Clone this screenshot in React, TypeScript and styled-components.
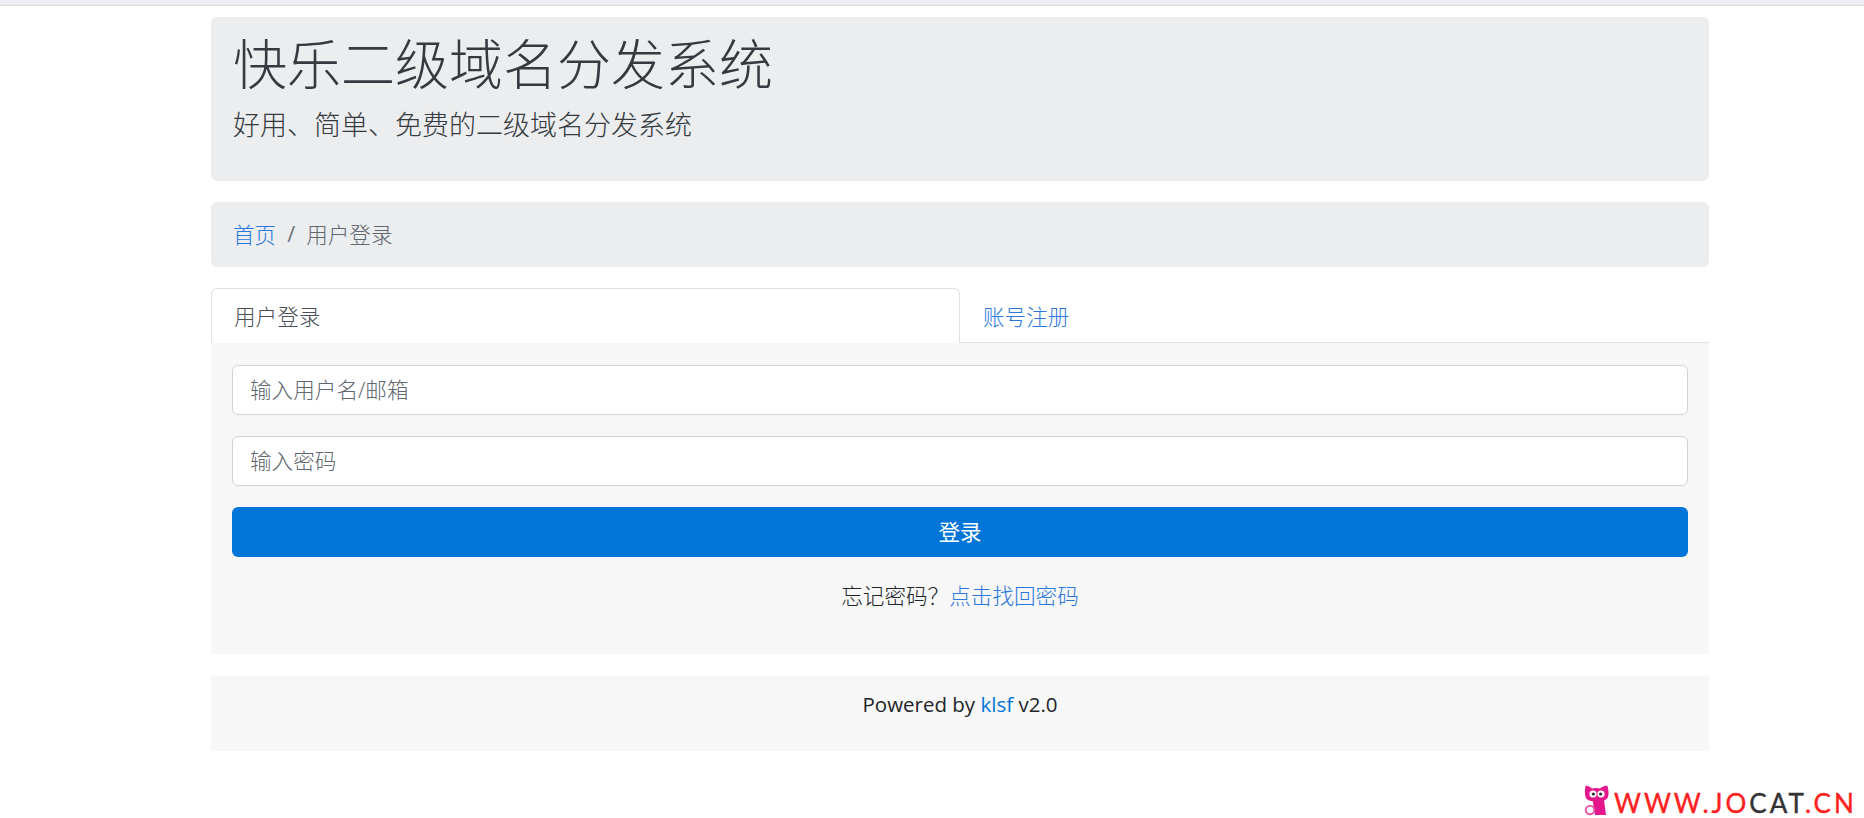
import React from "react";
import styled, { createGlobalStyle } from "styled-components";

const Global = createGlobalStyle`
  html, body { margin: 0; padding: 0; background: #fff; }
  body { font-family: "Open Sans", "Noto Sans CJK SC", sans-serif; font-size: 21.6px; font-weight: 300; color: #212529; overflow: hidden; }
  * { box-sizing: border-box; }
`;
const Page = styled.div`position: relative; width: 1864px; height: 818px; overflow: hidden;`;
const TopBar = styled.div`height: 6px; background: #efeef4; border-bottom: 1px solid #dcdce0;`;
const Container = styled.main`
  width: 1498px; margin-left: 211px; padding-top: 11px;
  display: flex; flex-direction: column;
`;
const Jumbotron = styled.header`
  height: 164px; background: #ecedef; border-radius: 6px; padding: 12px 22px 0; margin-bottom: 21px;
`;
const Title = styled.h1`
  margin: 0; font-size: 54px; font-weight: 300; line-height: 66px; color: #343a40;
  font-family: "Noto Sans CJK SC", sans-serif;
`;
const Lead = styled.p`
  margin: 11px 0 0; font-size: 27px; line-height: 36px; font-weight: 300; color: #343a40;
  font-family: "Noto Sans CJK SC", sans-serif;
`;
const Crumbs = styled.nav`
  height: 65px; background: #ecedef; border-radius: 6px; padding: 0 22px 3px; margin-bottom: 21px;
  display: flex; align-items: center; color: #5f676f;
`;
const Link = styled.a`color: #2a78dc; text-decoration: none;`;
const Sep = styled.span`padding: 0 11px; color: #6c757d; font-weight: 400;`;
const Tabs = styled.div`display: flex; height: 55px; border-bottom: 1px solid #dee2e6;`;
const Tab = styled.div<{ $active?: boolean }>`
  flex: 1; height: ${p => (p.$active ? "55px" : "54px")}; padding: 0 22px 1px; display: flex; align-items: center;
  color: ${p => (p.$active ? "#495057" : "#2a78dc")};
  background: #fff;
  border: 1px solid ${p => (p.$active ? "#dee2e6" : "transparent")};
  border-bottom: none; border-radius: 6px 6px 0 0;
`;
const Panel = styled.section`
  height: 311px; background: #f7f7f7; padding: 22px 21px 0; display: flex; flex-direction: column; gap: 21px;
`;
const Input = styled.input`
  display: block; width: 100%; height: 50px; border: 1px solid #ced4da; border-radius: 6px; background: #fff;
  padding: 0 17px 2px; font: inherit; outline: none;
  &::placeholder { color: #5f676f; opacity: 1; }
`;
const Button = styled.button`
  display: block; width: 100%; height: 50px; border: none; border-radius: 6px; background: #0275d8; color: #fff;
  font: inherit; font-weight: 400; padding: 0 0 3px;
`;
const Forgot = styled.div`text-align: center; margin-top: 2px; line-height: 32px;`;
const Footer = styled.footer`
  margin-top: 22px; height: 75px; background: #f7f7f7; text-align: center; padding-top: 12px; line-height: 32px;
  font-size: 20.5px; font-weight: 400;
`;
const FooterLink = styled.a`color: #0275d8; text-decoration: none;`;
const Mark = styled.div`
  position: absolute; left: 1584px; top: 784px; display: flex; align-items: flex-start; gap: 4px;
  font-family: "Lato", sans-serif; font-size: 26px; font-weight: 400; line-height: 34px;
  letter-spacing: 3px; color: #ff2020; -webkit-text-stroke: 0.4px currentColor;
`;
const MarkText = styled.span`margin-top: 2px;`;
const Dark = styled.span`color: #333;`;

const Cat = () => (
  <svg width="26" height="33" viewBox="0 0 26 33">
    <path d="M1.5 2 C3 1 6 3 8 4.5 C10 3.8 14 3.8 16 4.5 C18 3 21 1 23.5 2 C24.5 6 25 10 24 13 C22.5 16.5 18 17.5 12.5 17.5 C7 17.5 3 16.5 1.5 13 C0.5 10 0.8 6 1.5 2 Z" fill="#e2188c" />
    <path d="M9 16 H20 C20.5 21 21.5 26 22 31 H11 C10 26 9 21 9 16 Z" fill="#e2188c" />
    <circle cx="6" cy="26" r="4.2" fill="none" stroke="#ea5aa8" strokeWidth="2" />
    <circle cx="9" cy="10" r="3.6" fill="#fff" />
    <circle cx="17" cy="10" r="3.6" fill="#fff" />
    <circle cx="9.4" cy="10" r="1.6" fill="#3a2a3a" />
    <circle cx="16.6" cy="10" r="1.6" fill="#3a2a3a" />
  </svg>
);

export default function App() {
  return (
    <Page>
      <Global />
      <TopBar />
      <Container>
        <Jumbotron>
          <Title>快乐二级域名分发系统</Title>
          <Lead>好用、简单、免费的二级域名分发系统</Lead>
        </Jumbotron>
        <Crumbs><Link href="#">首页</Link><Sep>/</Sep>用户登录</Crumbs>
        <Tabs>
          <Tab $active>用户登录</Tab>
          <Tab>账号注册</Tab>
        </Tabs>
        <Panel>
          <Input placeholder="输入用户名/邮箱" />
          <Input type="password" placeholder="输入密码" />
          <Button>登录</Button>
          <Forgot>忘记密码？<Link href="#">点击找回密码</Link></Forgot>
        </Panel>
        <Footer>Powered by <FooterLink href="#">klsf</FooterLink> v2.0</Footer>
      </Container>
      <Mark><Cat /><MarkText>WWW.JO<Dark>CAT</Dark>.CN</MarkText></Mark>
    </Page>
  );
}
